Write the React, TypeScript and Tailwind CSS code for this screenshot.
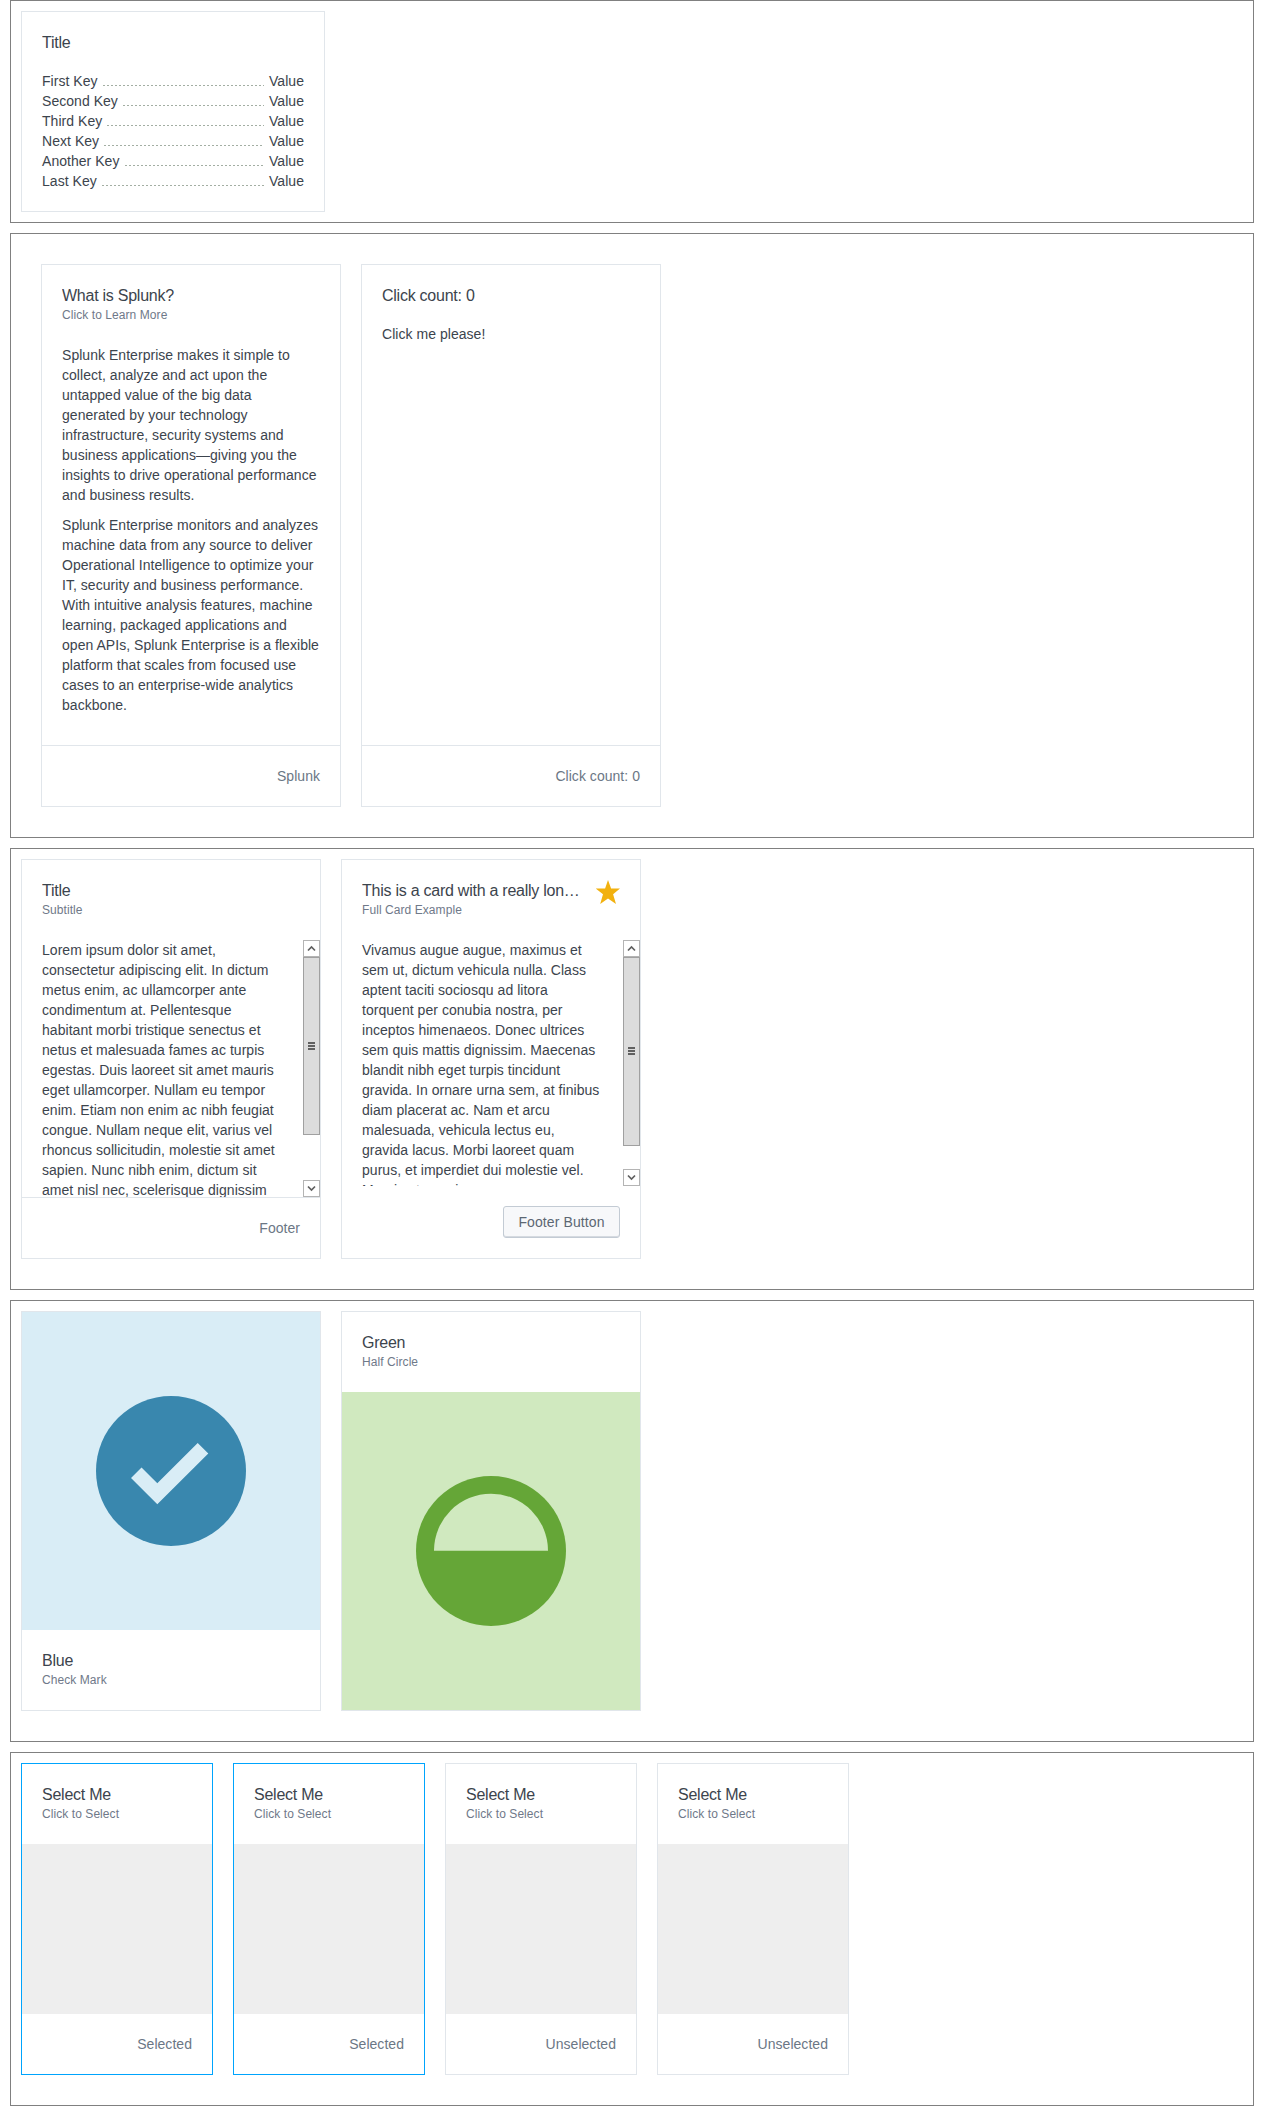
import type { ReactNode } from 'react';

const keys = ['First Key', 'Second Key', 'Third Key', 'Next Key', 'Another Key', 'Last Key'];

const introLines = [
  'Splunk Enterprise makes it simple to',
  'collect, analyze and act upon the',
  'untapped value of the big data',
  'generated by your technology',
  'infrastructure, security systems and',
  'business applications—giving you the',
  'insights to drive operational performance',
  'and business results.',
];

const detailLines = [
  'Splunk Enterprise monitors and analyzes',
  'machine data from any source to deliver',
  'Operational Intelligence to optimize your',
  'IT, security and business performance.',
  'With intuitive analysis features, machine',
  'learning, packaged applications and',
  'open APIs, Splunk Enterprise is a flexible',
  'platform that scales from focused use',
  'cases to an enterprise-wide analytics',
  'backbone.',
];

const loremLines = [
  'Lorem ipsum dolor sit amet,',
  'consectetur adipiscing elit. In dictum',
  'metus enim, ac ullamcorper ante',
  'condimentum at. Pellentesque',
  'habitant morbi tristique senectus et',
  'netus et malesuada fames ac turpis',
  'egestas. Duis laoreet sit amet mauris',
  'eget ullamcorper. Nullam eu tempor',
  'enim. Etiam non enim ac nibh feugiat',
  'congue. Nullam neque elit, varius vel',
  'rhoncus sollicitudin, molestie sit amet',
  'sapien. Nunc nibh enim, dictum sit',
  'amet nisl nec, scelerisque dignissim',
];

const vivamusLines = [
  'Vivamus augue augue, maximus et',
  'sem ut, dictum vehicula nulla. Class',
  'aptent taciti sociosqu ad litora',
  'torquent per conubia nostra, per',
  'inceptos himenaeos. Donec ultrices',
  'sem quis mattis dignissim. Maecenas',
  'blandit nibh eget turpis tincidunt',
  'gravida. In ornare urna sem, at finibus',
  'diam placerat ac. Nam et arcu',
  'malesuada, vehicula lectus eu,',
  'gravida lacus. Morbi laoreet quam',
  'purus, et imperdiet dui molestie vel.',
  'Mauris et eros in',
];

function Paragraph({ lines, className = '' }: { lines: string[]; className?: string }) {
  return <p className={`whitespace-pre ${className}`}>{lines.join('\n')}</p>;
}

function Section({ className, children }: { className: string; children: ReactNode }) {
  return (
    <section className={`flex items-start gap-5 border border-[#808080] ${className}`}>{children}</section>
  );
}

function Card({ className, selected, children }: { className: string; selected?: boolean; children: ReactNode }) {
  return (
    <article
      className={`flex shrink-0 flex-col border bg-white ${selected ? 'border-[#00a4fd]' : 'border-[#e1e6eb]'} ${className}`}
    >
      {children}
    </article>
  );
}

function Header({ title, subtitle, icon }: { title: string; subtitle?: string; icon?: ReactNode }) {
  return (
    <header className={`flex shrink-0 px-5 pt-5 ${subtitle ? 'pb-5' : 'pb-[18px]'}`}>
      <div className="min-w-0 flex-1">
        <h2 className="overflow-hidden whitespace-nowrap text-[16px] leading-[22px] tracking-[-0.25px]">{title}</h2>
        {subtitle && (
          <p className="-mt-0.5 truncate text-[12px] leading-5 tracking-[0.07px] text-[#6f7989]">{subtitle}</p>
        )}
      </div>
      {icon}
    </header>
  );
}

function Footer({ border = true, children }: { border?: boolean; children: ReactNode }) {
  return (
    <footer className={`shrink-0 p-5 text-right text-[#6b7785] ${border ? 'border-t border-[#e1e6eb]' : ''}`}>
      {children}
    </footer>
  );
}

function Chevron({ down }: { down?: boolean }) {
  return (
    <div className="flex h-[17px] shrink-0 items-center justify-center border border-[#b4b4b4] bg-white">
      <svg width="9" height="7" viewBox="0 0 9 7" fill="none" stroke="#606060" strokeWidth="1.7">
        <path d={down ? 'M1 1.5L4.5 5L8 1.5' : 'M1 5.5L4.5 2L8 5.5'} />
      </svg>
    </div>
  );
}

function Scrollbar({ thumb }: { thumb: string }) {
  return (
    <div className="flex w-[17px] shrink-0 flex-col bg-white">
      <Chevron />
      <div
        className={`flex shrink-0 flex-col items-center justify-center gap-px border border-[#a0a0a0] bg-[#dcdcdc] ${thumb}`}
      >
        <span className="h-0.5 w-[7px] bg-[#606060]" />
        <span className="h-0.5 w-[7px] bg-[#606060]" />
        <span className="h-0.5 w-[7px] bg-[#606060]" />
      </div>
      <div className="flex-1" />
      <Chevron down />
    </div>
  );
}

function ScrollBody({ thumb, lines }: { thumb: string; lines: string[] }) {
  return (
    <div className="flex min-h-0 flex-1">
      <div className="min-w-0 flex-1 overflow-hidden px-5">
        <Paragraph lines={lines} />
      </div>
      <Scrollbar thumb={thumb} />
    </div>
  );
}

export default function App() {
  return (
    <main className="flex h-[2106px] w-[1264px] flex-col gap-2.5 bg-white px-2.5 font-['Liberation_Sans',Arial,sans-serif] text-[14px] leading-5 tracking-[0.04px] text-[#3c444d]">
      <Section className="h-[223px] p-2.5">
        <Card className="h-[201px] w-[304px]">
          <div className="-mb-px">
            <Header title="Title" />
          </div>
          <dl className="px-5">
            {keys.map((key) => (
              <div key={key} className="flex">
                <dt>{key}</dt>
                <span className="mx-[5px] mt-[14px] h-px flex-1 bg-[repeating-linear-gradient(90deg,#a3aea3_0_2px,transparent_2px_4px)]" />
                <dd>Value</dd>
              </div>
            ))}
          </dl>
        </Card>
      </Section>

      <Section className="h-[605px] p-[30px]">
        <Card className="h-[543px] w-[300px]">
          <Header title="What is Splunk?" subtitle="Click to Learn More" />
          <div className="flex-1 px-5">
            <Paragraph lines={introLines} className="mb-2.5" />
            <Paragraph lines={detailLines} />
          </div>
          <Footer>Splunk</Footer>
        </Card>
        <Card className="h-[543px] w-[300px]">
          <div className="-mb-px">
            <Header title="Click count: 0" />
          </div>
          <p className="flex-1 px-5">Click me please!</p>
          <Footer>Click count: 0</Footer>
        </Card>
      </Section>

      <Section className="h-[442px] p-2.5">
        <Card className="h-[400px] w-[300px]">
          <Header title="Title" subtitle="Subtitle" />
          <ScrollBody thumb="h-[178px]" lines={loremLines} />
          <Footer>Footer</Footer>
        </Card>
        <Card className="h-[400px] w-[300px]">
          <Header
            title="This is a card with a really lon…"
            subtitle="Full Card Example"
            icon={
              <svg className="shrink-0" width="24" height="24" viewBox="0 0 24 24" fill="#f2b10f">
                <path d="M12 0L15.1 8.4H24L17.1 14.2L20 24L12 18.5L4.2 24L7 14.2L0 8.8V8.4H9.1Z" />
              </svg>
            }
          />
          <ScrollBody thumb="h-[189px] pb-px" lines={vivamusLines} />
          <Footer border={false}>
            <button className="ml-auto block h-8 w-[117px] rounded-[3px] border border-[#c3cbd4] bg-[#f7f8fa] text-center leading-5 tracking-[0.1px] text-[#5c6773] shadow-[inset_0_-1px_0_#d5dae0]">
              Footer Button
            </button>
          </Footer>
        </Card>
      </Section>

      <Section className="h-[442px] p-2.5">
        <Card className="h-[400px] w-[300px]">
          <div className="flex flex-1 items-center justify-center bg-[#d9edf6]">
            <svg width="150" height="150" viewBox="0 0 150 150">
              <circle cx="75" cy="75" r="75" fill="#3987ae" />
              <path d="M35 82L45.5 71.5L61.3 87.2L101.7 47L112.3 57.4L61.3 108.3Z" fill="#d9edf6" />
            </svg>
          </div>
          <Header title="Blue" subtitle="Check Mark" />
        </Card>
        <Card className="h-[400px] w-[300px]">
          <Header title="Green" subtitle="Half Circle" />
          <div className="flex flex-1 items-center justify-center bg-[#d0e9bf]">
            <svg width="150" height="150" viewBox="0 0 150 150">
              <circle cx="75" cy="75" r="75" fill="#65a637" />
              <path d="M18 74.7A57 57 0 0 1 132 74.7Z" fill="#d0e9bf" />
            </svg>
          </div>
        </Card>
      </Section>

      <Section className="h-[354px] p-2.5">
        {[true, true, false, false].map((selected, i) => (
          <Card key={i} className="h-[312px] w-[192px]" selected={selected}>
            <Header title="Select Me" subtitle="Click to Select" />
            <div className="flex-1 bg-[#eeeeee]" />
            <Footer border={false}>{selected ? 'Selected' : 'Unselected'}</Footer>
          </Card>
        ))}
      </Section>
    </main>
  );
}
